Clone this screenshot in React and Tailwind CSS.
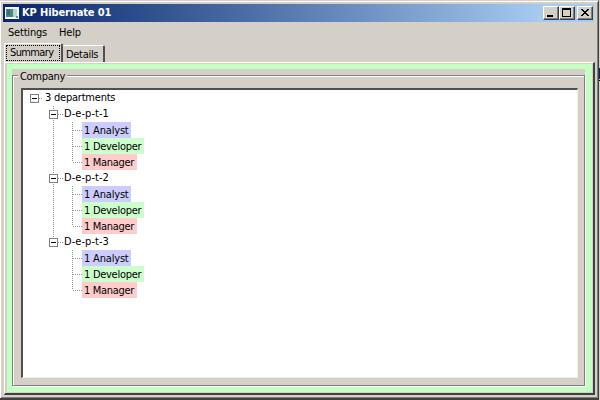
import React from "react";

function Toggle() {
  return (
    <svg className="block size-[9px] shrink-0" viewBox="0 0 9 9" shapeRendering="crispEdges">
      <rect x="0.5" y="0.5" width="8" height="8" fill="#fff" stroke="#808080" />
      <path d="M2 4.5h5" stroke="#000" />
    </svg>
  );
}

const roles = [
  { name: "1 Analyst", box: "w-[49px] bg-[#ccccff]", track: "tracking-[-0.18px]" },
  { name: "1 Developer", box: "w-[62px] bg-[#ccffcc]", track: "tracking-[-0.28px]" },
  { name: "1 Manager", box: "w-[55px] bg-[#ffcccc]", track: "tracking-[-0.32px]" },
];

function Department({ number, last }) {
  return (
    <div className="flex h-16">
      <svg className="block h-16 w-[33px] shrink-0" viewBox="0 0 33 64" shapeRendering="crispEdges">
        <g stroke="#909090" strokeDasharray="1 1" fill="none">
          <path d={last ? "M4.5 0V4" : "M4.5 0V64"} />
          <path d="M9 8.5H14M23.5 16V56M24 24.5H33M24 40.5H33M24 56.5H33" />
        </g>
        <rect x="0.5" y="4.5" width="8" height="8" fill="#fff" stroke="#808080" />
        <path d="M2 8.5h5" stroke="#000" />
      </svg>
      <div className="-ml-[18px]">
        <div className="h-4 tracking-[0.05px]">D-e-p-t-{number}</div>
        {roles.map((r) => (
          <div key={r.name} className={"ml-[18px] h-4 pl-0.5 leading-[17px] " + r.box}>
            <span className={r.track}>{r.name}</span>
          </div>
        ))}
      </div>
    </div>
  );
}

function CaptionButton({ children, className = "" }) {
  return (
    <div className={"h-[14px] w-4 border border-t-white border-l-white border-r-[#404040] border-b-[#404040] bg-[#d4d0c8] shadow-[inset_-1px_-1px_#808080] " + className}>
      <svg className="block h-3 w-[14px]" viewBox="0 0 14 12" shapeRendering="crispEdges">{children}</svg>
    </div>
  );
}

export default function App() {
  return (
    <div className="flex h-[400px] w-[600px] overflow-hidden bg-[#d4d0c8] font-['DejaVu_Sans_Condensed','DejaVu_Sans',sans-serif] text-[11px] leading-4 whitespace-nowrap text-black">
      <div className="flex h-[400px] w-[599px] flex-col border-t border-r border-b-2 border-t-[#d4d0c8] border-r-[#404040] border-b-[#404040] shadow-[inset_1px_1px_#fff,inset_-1px_-1px_#808080]">
        <div className="mt-[3px] mr-[4px] ml-[3px] flex h-[18px] shrink-0 items-center bg-linear-to-r from-[#0a246a] to-[#a6caf0] to-91% pl-0.5">
          <svg className="block h-3 w-[14px]" viewBox="0 0 14 12" shapeRendering="crispEdges">
            <rect width="14" height="12" fill="#f4f8f8" />
            <rect x="1" y="2" width="7" height="8" fill="#4f8585" />
            <rect x="2" y="3" width="3" height="5" fill="#397078" />
            <rect x="8" y="2" width="4" height="8" fill="#b8d4cf" />
            <path d="M11 9h2v2h-2z" fill="#748b9c" />
          </svg>
          <span className="ml-[3px] text-[11px] leading-[18px] font-bold tracking-[-0.12px] text-white">KP Hibernate 01</span>
          <div className="mr-px ml-auto flex">
            <CaptionButton><path d="M3 8h6v2H3z" /></CaptionButton>
            <CaptionButton><path d="M2 1h9v9H2zM3 3v6h7V3z" fillRule="evenodd" /></CaptionButton>
            <CaptionButton className="ml-0.5">
              <path d="M3 2h2v1h1v1h2V3h1V2h2v1h-1v1H9v1H8v1h1v1h1v1h1v1H9V8H8V7H6v1H5v1H3V8h1V7h1V6h1V5H5V4H4V3H3z" />
            </CaptionButton>
          </div>
        </div>
        <div className="flex h-[22px] shrink-0 pt-[3px] pl-[8px]">
          <span className="w-[51px] tracking-[-0.2px]">Settings</span>
          <span className="tracking-[-0.2px]">Help</span>
        </div>
        <div className="flex h-[18px] shrink-0 items-end pl-1">
          <div className="h-[19px] w-[59px] rounded-t-[2px] border-t border-r-2 border-l border-t-white border-r-[#505050] border-l-white pt-px pl-px">
            <div className="h-4 w-[54px] border border-dotted border-black pl-[3px] leading-[14px] tracking-[-0.62px]">Summary</div>
          </div>
          <div className="h-[17px] w-[42px] rounded-t-[2px] border-t border-r-2 border-t-white border-r-[#505050] pl-[3px] leading-[17px] tracking-[-0.3px]">Details</div>
        </div>
        <div className="mr-[3px] ml-[4px] h-[333px] shrink-0 border-t border-r-2 border-b-2 border-l border-t-white border-r-[#404040] border-b-[#404040] border-l-white pt-px pr-px pb-px pl-[2px]">
          <div className="h-[328px] bg-[#c3ffc3] pt-[5px] pr-[7px] pb-[6px] pl-[5px]">
            <div className="h-full bg-[#d4d0c8] pt-[6px]">
              <fieldset className="relative h-[311px] border border-[#808080] shadow-[inset_1px_1px_#fff,1px_1px_#fff] pt-3 pl-2">
                <span className="absolute -top-[6px] left-[5px] bg-[#d4d0c8] px-0.5 leading-[14px] tracking-[-0.3px]">Company</span>
                <div className="h-[290px] w-[557px] border-t-2 border-l-2 border-r border-b border-t-[#505050] border-l-[#505050] border-r-[#f0eee8] border-b-[#f0eee8] bg-white pl-[7px]">
                  <div className="flex h-4 items-center">
                    <Toggle />
                    <svg className="block h-px w-[6px]" shapeRendering="crispEdges">
                      <path d="M0 .5H4" stroke="#909090" strokeDasharray="1 1" />
                    </svg>
                    <span className="tracking-[-0.22px]">3 departments</span>
                  </div>
                  <div className="pl-[19px]">
                    <Department number={1} />
                    <Department number={2} />
                    <Department number={3} last />
                  </div>
                </div>
              </fieldset>
            </div>
          </div>
        </div>
      </div>
      <div className="w-px pt-[68px]">
        <div className="h-[11px] bg-[#0a246a]" />
        <div className="mt-px h-px bg-black" />
      </div>
    </div>
  );
}
